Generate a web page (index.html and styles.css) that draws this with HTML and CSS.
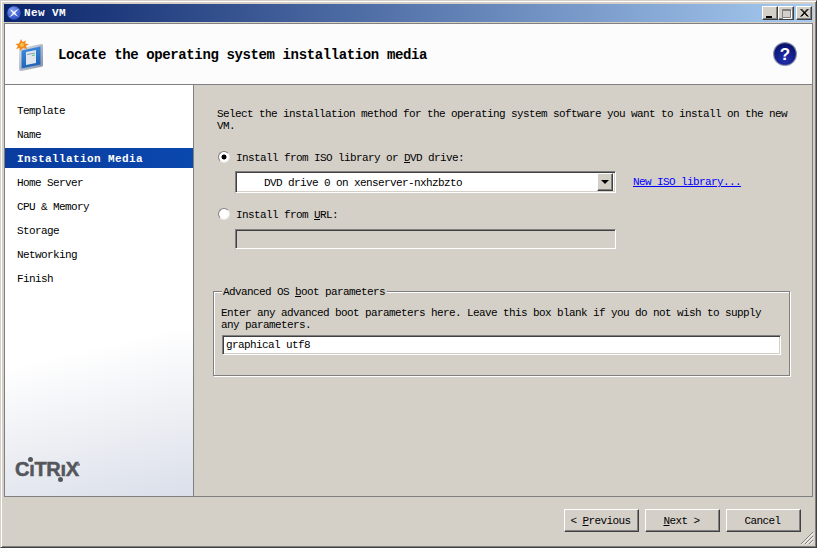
FILE: index.html
```html
<!DOCTYPE html>
<html lang="en">
<head>
<meta charset="utf-8">
<title>New VM</title>
<link rel="stylesheet" href="styles.css">
</head>
<body>
<div class="window">
  <div class="titlebar">
    <svg class="app-icon" width="14" height="14" viewBox="0 0 14 14">
      <defs><radialGradient id="ball" cx="0.4" cy="0.3" r="0.8"><stop offset="0" stop-color="#7f9cf0"/><stop offset="1" stop-color="#1a3fc0"/></radialGradient></defs>
      <circle cx="7" cy="7" r="6.8" fill="url(#ball)"/>
      <path d="M2.500 3.400C4.500 3.400 6 5 7 6C8 5 9.500 3.600 12 3C10.200 4.400 9 5.600 8.200 7C9 8.400 10.200 9.800 12 10.800C9.500 10.400 8 8.800 7 8C6 9 4.500 10.400 2 11C3.800 9.600 5 8.400 5.800 7C5 5.600 4 4.500 2.500 3.400Z" fill="#fff"/>
    </svg>
    <span class="title-text">New VM</span>
    <div class="caption-buttons">
      <div class="cap-btn"><svg width="14" height="12" viewBox="0 0 14 12"><rect x="3" y="9" width="6" height="2" fill="#000"/></svg></div>
      <div class="cap-btn"><svg width="14" height="12" viewBox="0 0 14 12"><path d="M3.500 2.500H11.500V10.500H3.500Z M3.500 3.500H11.500" fill="none" stroke="#808080"/><path d="M4 11.500H12.500V3.500" fill="none" stroke="#fff"/></svg></div>
      <div class="cap-btn cap-close"><svg width="14" height="12" viewBox="0 0 14 12"><path d="M3.500 2L10.500 9.500M4.500 2L11.500 9.500M10.500 2L3.500 9.500M11.500 2L4.500 9.500" stroke="#000" fill="none"/></svg></div>
    </div>
  </div>
  <div class="body-frame">
    <header class="page-header">
      <svg class="page-icon" width="30" height="32" viewBox="0 0 30 32">
        <defs>
          <linearGradient id="scr" x1="0" y1="0" x2="0.3" y2="1"><stop offset="0" stop-color="#3f8fe0"/><stop offset="1" stop-color="#1f63b8"/></linearGradient>
          <linearGradient id="frm" x1="0" y1="0" x2="1" y2="1"><stop offset="0" stop-color="#e4e8f0"/><stop offset="1" stop-color="#7f8ba5"/></linearGradient>
        </defs>
        <path d="M4 9.500L26.500 5Q28 5 28 6.500V26Q28 27.500 26.500 27.800L6 32Q4 32 4 30Z" fill="url(#frm)"/>
        <path d="M6.500 11.500L25.500 7.500V25.500L6.500 29.500Z" fill="url(#scr)"/>
        <path d="M11 13L21 11V24L11 26Z" fill="#dfe6ee"/>
        <path d="M12 15.500L20 14" stroke="#8fa0b5"/>
        <path d="M17 16.500L20 16" stroke="#4fd080"/>
        <path d="M6 0L7.500 3L11 1.500L10 4.500L14 5L11 7L12 10L8 9L5 12L4.500 9L1 10L3 7L0.500 5L4 4.500Z" fill="#f08a1c"/>
        <circle cx="7" cy="6" r="2" fill="#fbc04a"/>
      </svg>
      <h1 class="page-title">Locate the operating system installation media</h1>
      <svg class="help-icon" width="26" height="26" viewBox="0 0 26 26">
        <defs><radialGradient id="helpball" cx="0.5" cy="0.75" r="0.75"><stop offset="0" stop-color="#2430b0"/><stop offset="1" stop-color="#06106a"/></radialGradient></defs>
        <circle cx="13" cy="13" r="12" fill="#8a8fa8"/>
        <circle cx="13" cy="13" r="10.800" fill="url(#helpball)"/>
        <text x="13" y="19" text-anchor="middle" class="help-mark">?</text>
      </svg>
    </header>
    <div class="columns">
      <nav class="sidebar">
        <ul class="steps">
          <li class="step">Template</li>
          <li class="step">Name</li>
          <li class="step step-active">Installation Media</li>
          <li class="step">Home Server</li>
          <li class="step">CPU &amp; Memory</li>
          <li class="step">Storage</li>
          <li class="step">Networking</li>
          <li class="step">Finish</li>
        </ul>
        <div class="logo"><span class="logo-word">CıTRıX</span><span class="logo-dot logo-dot-a"></span><span class="logo-dot logo-dot-b"></span><span class="logo-reg"></span></div>
      </nav>
      <main class="content">
        <p class="intro">Select the installation method for the operating system software you want to install on the new VM.</p>
        <div class="radio-row first-radio">
          <span class="radio radio-on"></span>
          <span class="radio-label">Install from ISO library or <u>D</u>VD drive:</span>
        </div>
        <div class="combo-row">
          <div class="combo">
            <span class="combo-value">DVD drive 0 on xenserver-nxhzbzto</span>
            <span class="combo-btn"><svg width="9" height="5" viewBox="0 0 9 5"><path d="M0 0H8L4 4Z" fill="#000"/></svg></span>
          </div>
          <a class="link" href="#">New ISO library...</a>
        </div>
        <div class="radio-row second-radio">
          <span class="radio"></span>
          <span class="radio-label">Install from <u>U</u>RL:</span>
        </div>
        <div class="url-field"></div>
        <section class="group">
          <span class="group-legend">Advanced OS <u>b</u>oot parameters</span>
          <p class="group-text">Enter any advanced boot parameters here. Leave this box blank if you do not wish to supply any parameters.</p>
          <div class="boot-field">graphical utf8</div>
        </section>
      </main>
    </div>
  </div>
  <footer class="footer">
    <button class="btn" type="button">&lt; <u>P</u>revious</button>
    <button class="btn" type="button"><u>N</u>ext &gt;</button>
    <button class="btn" type="button">Cancel</button>
    <svg class="grip" width="14" height="14" viewBox="0 0 14 14"><path d="M1 13L13 1M5 13L13 5M9 13L13 9" stroke="#808080" fill="none"/><path d="M2 13.500L13.500 2M6 13.500L13.500 6M10 13.500L13.500 10" stroke="#fff" fill="none"/></svg>
  </footer>
</div>
</body>
</html>
```
FILE: styles.css
```css
* { box-sizing: border-box; }
html, body { margin: 0; padding: 0; }
body {
  width: 817px;
  height: 548px;
  overflow: hidden;
  background: #d4d0c8;
  font-family: "Liberation Mono", monospace;
  font-size: 11px;
  letter-spacing: -0.6px;
  color: #000;
}
p, h1, ul { margin: 0; padding: 0; }
.window {
  position: relative;
  width: 817px;
  height: 548px;
  background: #d4d0c8;
  border: 1px solid;
  border-color: #d4d0c8 #404040 #404040 #d4d0c8;
  box-shadow: inset 1px 1px 0 #fff, inset -1px -1px 0 #808080;
  padding: 3px 3px 1px 3px;
  display: flex;
  flex-direction: column;
}
.titlebar {
  height: 18px;
  flex: none;
  display: flex;
  align-items: center;
  padding: 0 1px 0 3px;
  background: linear-gradient(90deg, #0a246a, #a6caf0);
  color: #fff;
}
.app-icon { flex: none; }
.title-text {
  margin-left: 3px;
  font-weight: bold;
  letter-spacing: 0.4px;
}
.caption-buttons { margin-left: auto; display: flex; }
.cap-btn {
  width: 16px;
  height: 14px;
  background: #d4d0c8;
  border: 1px solid;
  border-color: #fff #404040 #404040 #fff;
  box-shadow: inset -1px -1px 0 #808080;
  display: flex;
}
.cap-close { margin-left: 2px; }
.body-frame {
  margin-top: 1px;
  flex: none;
  height: 474px;
  border: 1px solid #808080;
  display: flex;
  flex-direction: column;
}
.page-header {
  flex: none;
  height: 61px;
  background: #fcfcfc;
  border-bottom: 1px solid #808080;
  display: flex;
  align-items: center;
  padding: 0 14px 0 10px;
}
.page-icon { flex: none; margin-top: 1px; }
.page-title {
  margin-left: 13px;
  padding-top: 2px;
  font-size: 14px;
  font-weight: bold;
  letter-spacing: -0.38px;
}
.help-icon { margin-left: auto; }
.help-mark {
  font-family: "Liberation Sans", sans-serif;
  font-size: 17px;
  font-weight: bold;
  fill: #fff;
  letter-spacing: 0;
}
.columns { flex: 1; display: flex; min-height: 0; }
.sidebar {
  flex: none;
  width: 189px;
  border-right: 1px solid #808080;
  background: linear-gradient(167deg, #fff 62%, #eceef3 82%, #dadfea 100%);
  padding-top: 15px;
  display: flex;
  flex-direction: column;
}
.steps { list-style: none; display: flex; flex-direction: column; gap: 4px; }
.step {
  height: 20px;
  line-height: 22px;
  padding-left: 12px;
}
.step-active {
  background: linear-gradient(90deg, #0a3c9e, #0a48ae);
  color: #fff;
  font-weight: bold;
  letter-spacing: 0.4px;
}
.logo {
  position: relative;
  margin: auto 0 14px 10px;
  width: 68px;
  height: 22px;
  color: #55565b;
}
.logo-word {
  display: block;
  font-family: "Liberation Sans", sans-serif;
  font-weight: bold;
  font-size: 20px;
  line-height: 18px;
  letter-spacing: -0.3px;
  -webkit-text-stroke: 0.5px #55565b;
}
.logo-dot {
  position: absolute;
  width: 5px;
  height: 5px;
  border-radius: 50%;
  background: #55565b;
}
.logo-dot-a { left: 13px; top: -3px; }
.logo-dot-b { left: 43px; top: 17px; }
.logo-reg {
  position: absolute;
  left: 62px;
  top: 3px;
  width: 3px;
  height: 3px;
  border-radius: 50%;
  background: #77787c;
}
.content {
  flex: 1;
  background: #d4d0c8;
  padding: 23px 0 0 23px;
  min-width: 0;
}
.intro { width: 576px; line-height: 12px; }
.radio-row {
  display: flex;
  align-items: center;
  gap: 6px;
  height: 14px;
  margin-left: 1px;
}
.radio-label { padding-top: 2px; }
.first-radio { margin-top: 18px; }
.second-radio { margin-top: 14px; }
.radio {
  width: 12px;
  height: 12px;
  border-radius: 50%;
  flex: none;
  background: #fff;
  border: 1px solid;
  border-color: #808080 #e8e6e0 #e8e6e0 #808080;
}
.radio-on {
  background: radial-gradient(circle, #000 0 2.2px, #fff 2.8px);
}
.combo-row {
  display: flex;
  align-items: center;
  margin: 7px 0 0 18px;
}
.combo, .url-field, .boot-field {
  border: 1px solid;
  border-color: #808080 #fff #fff #808080;
  box-shadow: inset 1px 1px 0 #404040, inset -1px -1px 0 #d4d0c8;
}
.combo {
  width: 381px;
  height: 22px;
  background: #fff;
  padding-right: 2px;
  display: flex;
  align-items: center;
  justify-content: space-between;
}
.combo-value { padding: 1px 0 0 28px; }
.combo-btn {
  width: 16px;
  height: 18px;
  background: #d4d0c8;
  border: 1px solid;
  border-color: #fff #404040 #404040 #fff;
  box-shadow: inset -1px -1px 0 #808080;
  display: flex;
  align-items: center;
  justify-content: center;
}
.link { margin-left: 17px; color: #0000ff; }
.url-field {
  width: 381px;
  height: 20px;
  margin: 8px 0 0 18px;
}
.group {
  position: relative;
  width: 577px;
  height: 85px;
  margin: 42px 0 0 -4px;
  border: 1px solid #808080;
  box-shadow: inset 1px 1px 0 #fff, 1px 1px 0 #fff;
  padding: 15px 7px 0 7px;
}
.group-legend {
  position: absolute;
  left: 8px;
  top: -6px;
  padding: 0 2px 0 1px;
  background: #d4d0c8;
  line-height: 12px;
}
.group-text { line-height: 12px; width: 552px; }
.boot-field {
  width: 559px;
  height: 20px;
  margin: 4px 0 0 1px;
  padding: 1px 0 0 3px;
  line-height: 16px;
  background: #fff;
}
.footer {
  flex: 1;
  display: flex;
  justify-content: flex-end;
  align-items: flex-start;
  gap: 6px;
  padding: 12px 12px 0 0;
}
.btn {
  width: 75px;
  height: 23px;
  padding: 0 2px 0 0;
  background: #d4d0c8;
  font: inherit;
  letter-spacing: inherit;
  color: #000;
  border: 1px solid;
  border-color: #fff #404040 #404040 #fff;
  box-shadow: inset -1px -1px 0 #808080;
}
.grip { position: absolute; right: 2px; bottom: 2px; }
```
